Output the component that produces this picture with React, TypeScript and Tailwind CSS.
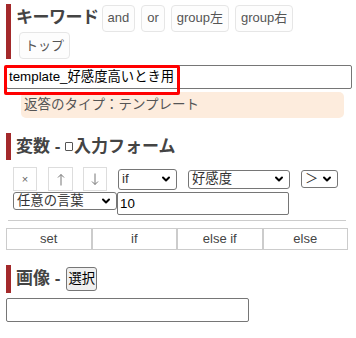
import { ChevronDown } from "lucide-react"

const font = { fontFamily: '"Liberation Sans", "Noto Sans CJK JP", sans-serif' }

function Heading({ children, className = "" }: { children: React.ReactNode; className?: string }) {
  return (
    <div className={`ml-[6px] border-l-[5px] border-[#a3292b] pl-[5px] text-[17px] font-bold text-[#444] ${className}`}>
      {children}
    </div>
  )
}

function Select({ value, className }: { value: string; className: string }) {
  return (
    <div className={`relative flex items-center rounded-[3px] border border-[#767676] bg-white pl-[3px] text-[13.33px] text-[#333] ${className}`}>
      <span className="leading-none">{value}</span>
      <ChevronDown className="absolute right-[4px] h-[12px] w-[12px] text-black" strokeWidth={4} />
    </div>
  )
}

function Arrow({ down }: { down?: boolean }) {
  return (
    <svg width="8" height="13" viewBox="0 0 8 13" className={down ? "rotate-180" : ""}>
      <path d="M4 1.5V12.5M1 4.5L4 1.5L7 4.5" fill="none" stroke="#777" strokeWidth="1" />
    </svg>
  )
}

const tagButtons = ["and", "or", "group左", "group右", "トップ"]
const tabs = ["set", "if", "else if", "else"]

export default function App() {
  return (
    <div className="relative h-[338px] w-[356px] overflow-hidden bg-white" style={font}>
      <Heading className="mt-[4px] flex w-[340px] flex-wrap items-center">
        <span className="flex h-[28px] items-center tracking-[-0.5px]">キーワード</span>
        {tagButtons.map((t) => (
          <span
            key={t}
            className="mx-[3px] flex h-[27px] items-center rounded-[4px] border border-[#e6e6e6] bg-[#fdfdfd] px-[5px] text-[13px] font-normal text-[#555]"
          >
            {t}
          </span>
        ))}
      </Heading>

      <div className="ml-[6px] mt-[6px] flex h-[24px] w-[346px] items-center rounded-[2px] border border-[#767676] pl-[2px] text-[13.33px] text-black">
        template_好感度高いとき用
      </div>
      <div className="absolute left-[4px] top-[65px] h-[30px] w-[176px] rounded-[2px] border-[3px] border-[#ff0000]" />

      <div className="ml-[21px] mt-[3px] flex h-[26px] w-[323px] items-center rounded-[5px] bg-[#fdecdd] pl-[3px] text-[13.5px] text-[#555]">
        返答のタイプ：テンプレート
      </div>

      <Heading className="mt-[15px] flex h-[27px] items-center">
        <span>変数 -&nbsp;</span>
        <span className="mr-[1px] inline-block h-[9px] w-[8px] rounded-[1px] border-[1.5px] border-[#555]" />
        <span>入力フォーム</span>
      </Heading>

      <div className="ml-[13px] mt-[7px] flex items-center">
        <span className="flex h-[24px] w-[24px] items-center justify-center border border-[#ddd] text-[11px] text-[#666]">×</span>
        <span className="ml-[11px] flex h-[24px] w-[25px] items-center justify-center border border-[#ddd]">
          <Arrow />
        </span>
        <span className="ml-[10px] flex h-[24px] w-[24px] items-center justify-center border border-[#ddd]">
          <Arrow down />
        </span>
        <Select value="if" className="ml-[11px] h-[21px] w-[59px]" />
        <Select value="好感度" className="ml-[11px] h-[19px] w-[102px]" />
        <Select value="＞" className="ml-[11px] h-[18px] w-[37px]" />
      </div>
      <div className="ml-[13px] mt-[1px] flex items-start">
        <Select value="任意の言葉" className="h-[18px] w-[104px]" />
        <div className="flex h-[23px] w-[172px] items-center rounded-[2px] border border-[#767676] pl-[2px] text-[13.33px] text-black">
          10
        </div>
      </div>

      <div className="ml-[8px] mt-[5px] h-px w-[338px] bg-[#ccc]" />

      <div className="ml-[6px] mt-[7px] grid w-[342px] grid-cols-4">
        {tabs.map((t) => (
          <div key={t} className="flex h-[22px] items-center justify-center border border-[#ccc] text-[13px] text-[#444]">
            {t}
          </div>
        ))}
      </div>

      <Heading className="mt-[15px] flex h-[28px] items-center">
        <span>画像 -</span>
        <span className="ml-[6px] flex h-[24px] items-center rounded-[3px] border border-[#767676] bg-[#efefef] px-[1px] text-[13.33px] font-normal text-black">
          選択
        </span>
      </Heading>

      <div className="ml-[6px] mt-[5px] h-[24px] w-[243px] rounded-[2px] border border-[#767676]" />
    </div>
  )
}
